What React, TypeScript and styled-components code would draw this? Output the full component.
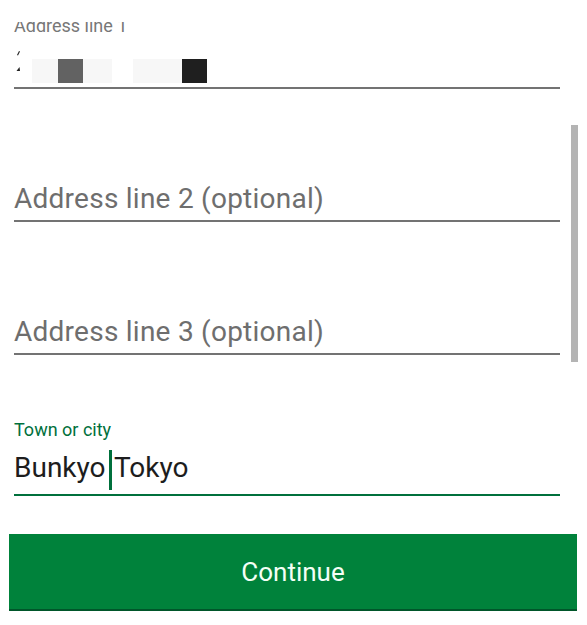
import React from 'react'
import styled, { createGlobalStyle } from 'styled-components'

const colors = {
  green: '#00703c',
  button: '#00823b',
  buttonShadow: '#00562a',
  text: '#1d1d1d',
  label: '#777777',
  hint: '#6e6e6e',
  rule: '#737373',
  thumb: '#b4b4b4',
  redactLight: '#f7f7f7',
  redactMid: '#626262',
  redactDark: '#1f1f1f',
}

const GlobalStyle = createGlobalStyle`
  html, body {
    margin: 0;
    background: #fff;
  }

  body {
    font-family: Roboto, "Noto Sans", sans-serif;
    -webkit-font-smoothing: antialiased;
  }
`

const Screen = styled.div`
  width: 587px;
  height: 625px;
  padding-top: 22px;
  box-sizing: border-box;
  display: flex;
  flex-direction: column;
  overflow: hidden;
`

const ScrollArea = styled.div`
  position: relative;
  flex-shrink: 0;
  height: 498px;
  overflow: hidden;
`

const ScrollThumb = styled.div`
  position: absolute;
  top: 103px;
  right: 9px;
  width: 7px;
  height: 237px;
  background: ${colors.thumb};
`

const Form = styled.div`
  display: flex;
  flex-direction: column;
  margin-top: -6px;
  padding: 0 27px 0 14px;
`

const Field = styled.div<{ $gap: number }>`
  display: flex;
  flex-direction: column;
  margin-top: ${(p) => p.$gap}px;
`

const Label = styled.div<{ $active?: boolean; $hidden?: boolean }>`
  height: 20px;
  font-size: 18px;
  line-height: 20px;
  color: ${(p) => (p.$active ? colors.green : colors.label)};
  visibility: ${(p) => (p.$hidden ? 'hidden' : 'visible')};
`

const Value = styled.div<{ $active?: boolean }>`
  display: flex;
  align-items: flex-end;
  height: ${(p) => (p.$active ? 50 : 47)}px;
  padding-bottom: 4px;
  font-size: 28px;
  line-height: 30px;
  color: ${colors.text};
  border-bottom: 2px solid ${(p) => (p.$active ? colors.green : colors.rule)};
`

const Placeholder = styled.span`
  margin-bottom: 2px;
  letter-spacing: 0.25px;
  color: ${colors.hint};
`

const Typed = styled.span`
  white-space: pre;
`

const Caret = styled.span`
  display: inline-block;
  width: 3px;
  height: 40px;
  margin: 0 -4px 0 3px;
  vertical-align: -13px;
  background: ${colors.green};
`

const Redacted = styled.span<{ $tone: string; $w: number; $ml?: number }>`
  display: block;
  flex-shrink: 0;
  width: ${(p) => p.$w}px;
  height: 24px;
  margin-left: ${(p) => p.$ml ?? 0}px;
  background: ${(p) => p.$tone};
`

const Marks = styled.svg`
  display: block;
  flex-shrink: 0;
  margin-left: 2px;
`

const Footer = styled.div`
  padding: 14px 10px 0 9px;
`

const ContinueButton = styled.button`
  display: flex;
  align-items: center;
  justify-content: center;
  width: 100%;
  height: 77px;
  box-sizing: border-box;
  border: none;
  border-bottom: 2px solid ${colors.buttonShadow};
  border-radius: 0;
  padding: 0;
  background: ${colors.button};
  color: #f4fff6;
  font-family: Roboto, "Noto Sans", sans-serif;
  font-size: 26px;
  cursor: pointer;
`

export default function App() {
  return (
    <>
      <GlobalStyle />
      <Screen>
        <ScrollArea>
          <Form>
            <Field $gap={0}>
              <Label>Address line 1</Label>
              <Value>
                <Marks width="5" height="34" viewBox="0 0 5 34">
                  <path d="M1 6 L3 2 L4 2.5 L2 6.5 Z" fill="#222" />
                  <path d="M0.5 22 L3.5 18 L4 22 Z" fill="#222" />
                </Marks>
                <Redacted $tone={colors.redactLight} $w={26} $ml={11} />
                <Redacted $tone={colors.redactMid} $w={25} />
                <Redacted $tone={colors.redactLight} $w={29} />
                <Redacted $tone={colors.redactLight} $w={49} $ml={21} />
                <Redacted $tone={colors.redactDark} $w={25} />
              </Value>
            </Field>

            <Field $gap={60}>
              <Label $hidden>Address line 2 (optional)</Label>
              <Value>
                <Placeholder>Address line 2 (optional)</Placeholder>
              </Value>
            </Field>

            <Field $gap={60}>
              <Label $hidden>Address line 3 (optional)</Label>
              <Value>
                <Placeholder>Address line 3 (optional)</Placeholder>
              </Value>
            </Field>

            <Field $gap={65}>
              <Label $active>Town or city</Label>
              <Value $active>
                <Typed>
                  Bunkyo
                  <Caret />
                  {' Tokyo'}
                </Typed>
              </Value>
            </Field>
          </Form>
          <ScrollThumb />
        </ScrollArea>

        <Footer>
          <ContinueButton type="button">Continue</ContinueButton>
        </Footer>
      </Screen>
    </>
  )
}
